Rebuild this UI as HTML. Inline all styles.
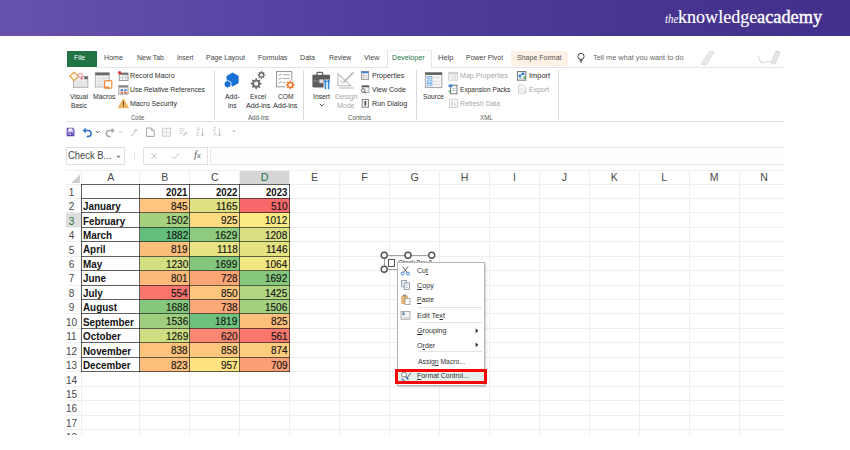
<!DOCTYPE html>
<html><head><meta charset="utf-8"><title>Format Control</title>
<style>
html,body{margin:0;padding:0;background:#fff;}
body{width:850px;height:450px;position:relative;overflow:hidden;font-family:"Liberation Sans",sans-serif;}
.t{position:absolute;white-space:nowrap;display:block;}
.r{position:absolute;display:block;}
u{text-decoration-thickness:0.6px;text-underline-offset:0.8px;}
</style></head><body>
<div class="r" style="left:0.00px;top:0.00px;width:850.00px;height:36.00px;background:linear-gradient(90deg,#6753ad 0%,#5a46a4 25%,#4f3c9a 50%,#473590 75%,#43308c 100%);"></div>
<span class="t" style="left:664.70px;top:11.80px;font-size:12px;line-height:15.6px;color:#fff;font-family:'Liberation Serif',serif;font-style:italic;transform:scaleX(0.9072);transform-origin:0 50%;">the</span>
<span class="t" style="left:678.00px;top:6.00px;font-size:18px;line-height:23.4px;color:#fff;font-family:'Liberation Serif',serif;transform:scaleX(1.0041);transform-origin:0 50%;-webkit-text-stroke:0.15px #fff;">knowledge</span>
<span class="t" style="left:757.30px;top:6.00px;font-size:18px;line-height:23.4px;color:#fff;font-family:'Liberation Serif',serif;transform:scaleX(1.0179);transform-origin:0 50%;-webkit-text-stroke:0.4px #fff;">academy</span>
<div class="r" style="left:67.00px;top:51.00px;width:30.00px;height:16.00px;background:#217346;"></div>
<span class="t" style="left:73.70px;top:53.20px;font-size:8.0px;line-height:10.4px;color:#fff;font-family:'Liberation Sans',sans-serif;transform:scaleX(0.8456);transform-origin:0 50%;">File</span>
<span class="t" style="left:104.00px;top:53.20px;font-size:8.0px;line-height:10.4px;color:#444;font-family:'Liberation Sans',sans-serif;transform:scaleX(0.8903);transform-origin:0 50%;">Home</span>
<span class="t" style="left:136.50px;top:53.20px;font-size:8.0px;line-height:10.4px;color:#444;font-family:'Liberation Sans',sans-serif;transform:scaleX(0.8715);transform-origin:0 50%;">New Tab</span>
<span class="t" style="left:177.00px;top:53.20px;font-size:8.0px;line-height:10.4px;color:#444;font-family:'Liberation Sans',sans-serif;transform:scaleX(0.8197);transform-origin:0 50%;">Insert</span>
<span class="t" style="left:206.00px;top:53.20px;font-size:8.0px;line-height:10.4px;color:#444;font-family:'Liberation Sans',sans-serif;transform:scaleX(0.8681);transform-origin:0 50%;">Page Layout</span>
<span class="t" style="left:257.60px;top:53.20px;font-size:8.0px;line-height:10.4px;color:#444;font-family:'Liberation Sans',sans-serif;transform:scaleX(0.8818);transform-origin:0 50%;">Formulas</span>
<span class="t" style="left:300.00px;top:53.20px;font-size:8.0px;line-height:10.4px;color:#444;font-family:'Liberation Sans',sans-serif;transform:scaleX(0.8877);transform-origin:0 50%;">Data</span>
<span class="t" style="left:328.50px;top:53.20px;font-size:8.0px;line-height:10.4px;color:#444;font-family:'Liberation Sans',sans-serif;transform:scaleX(0.8463);transform-origin:0 50%;">Review</span>
<span class="t" style="left:363.70px;top:53.20px;font-size:8.0px;line-height:10.4px;color:#444;font-family:'Liberation Sans',sans-serif;transform:scaleX(0.8898);transform-origin:0 50%;">View</span>
<div class="r" style="left:97.00px;top:66.60px;width:686.50px;height:1.00px;background:#e4e4e4;"></div>
<div class="r" style="left:386.50px;top:50.00px;width:45.00px;height:18.00px;background:#fff;border:1px solid #e2e2e2;box-sizing:border-box;border-bottom:none;border-top-color:#f0f0f0;"></div>
<span class="t" style="left:392.00px;top:53.20px;font-size:8.0px;line-height:10.4px;color:#217346;font-family:'Liberation Sans',sans-serif;transform:scaleX(0.8940);transform-origin:0 50%;">Developer</span>
<span class="t" style="left:437.90px;top:53.20px;font-size:8.0px;line-height:10.4px;color:#444;font-family:'Liberation Sans',sans-serif;transform:scaleX(0.9360);transform-origin:0 50%;">Help</span>
<span class="t" style="left:466.30px;top:53.20px;font-size:8.0px;line-height:10.4px;color:#444;font-family:'Liberation Sans',sans-serif;transform:scaleX(0.8692);transform-origin:0 50%;">Power Pivot</span>
<div class="r" style="left:511.00px;top:51.40px;width:56.70px;height:14.40px;background:#fdf1e5;"></div>
<span class="t" style="left:517.00px;top:53.20px;font-size:8.0px;line-height:10.4px;color:#555;font-family:'Liberation Sans',sans-serif;transform:scaleX(0.8779);transform-origin:0 50%;">Shape Format</span>
<span class="t" style="left:592.50px;top:53.20px;font-size:8.0px;line-height:10.4px;color:#6a6a6a;font-family:'Liberation Sans',sans-serif;transform:scaleX(0.9167);transform-origin:0 50%;">Tell me what you want to do</span>
<svg class="r" style="left:576.00px;top:52.00px" width="10" height="12" viewBox="0 0 10 12"><circle cx="5" cy="4.4" r="3.1" fill="none" stroke="#444" stroke-width="1"/><path d="M3.6 8.4h2.8M3.9 10h2.2" stroke="#444" stroke-width="1" fill="none"/></svg>
<svg class="r" style="left:698.00px;top:50.00px" width="18" height="16" viewBox="0 0 18 16"><path d="M12 1 L16 2 L8 15 L3 14 Z" fill="#e9e9e9" stroke="#d5d5d5" stroke-width="0.8"/></svg>
<svg class="r" style="left:756.00px;top:50.00px" width="26" height="16" viewBox="0 0 26 16"><path d="M20 1 L24 2 L19 14 L15 13 Z" fill="#e6e6e6" stroke="#d0d0d0" stroke-width="0.8"/><path d="M2 6 L5 13 L15 11" fill="none" stroke="#d8d8d8" stroke-width="1"/></svg>
<div class="r" style="left:66.00px;top:121.00px;width:717.50px;height:1.00px;background:#dedede;"></div>
<div class="r" style="left:214.00px;top:69.50px;width:1.00px;height:50.00px;background:#d9d9d9;"></div>
<div class="r" style="left:302.90px;top:69.50px;width:1.00px;height:50.00px;background:#d9d9d9;"></div>
<div class="r" style="left:415.90px;top:69.50px;width:1.00px;height:50.00px;background:#d9d9d9;"></div>
<div class="r" style="left:557.50px;top:69.50px;width:1.00px;height:50.00px;background:#d9d9d9;"></div>
<span class="t" style="left:69.50px;top:91.50px;font-size:8.0px;line-height:10.4px;color:#2e2e2e;font-family:'Liberation Sans',sans-serif;transform:scaleX(0.8316);transform-origin:0 50%;">Visual</span>
<span class="t" style="left:70.50px;top:100.90px;font-size:8.0px;line-height:10.4px;color:#2e2e2e;font-family:'Liberation Sans',sans-serif;transform:scaleX(0.8179);transform-origin:0 50%;">Basic</span>
<span class="t" style="left:92.50px;top:91.50px;font-size:8.0px;line-height:10.4px;color:#2e2e2e;font-family:'Liberation Sans',sans-serif;transform:scaleX(0.8579);transform-origin:0 50%;">Macros</span>
<span class="t" style="left:130.00px;top:70.60px;font-size:8.0px;line-height:10.4px;color:#2e2e2e;font-family:'Liberation Sans',sans-serif;transform:scaleX(0.8878);transform-origin:0 50%;">Record Macro</span>
<span class="t" style="left:130.00px;top:84.60px;font-size:8.0px;line-height:10.4px;color:#2e2e2e;font-family:'Liberation Sans',sans-serif;transform:scaleX(0.8476);transform-origin:0 50%;">Use Relative References</span>
<span class="t" style="left:130.00px;top:98.60px;font-size:8.0px;line-height:10.4px;color:#2e2e2e;font-family:'Liberation Sans',sans-serif;transform:scaleX(0.8810);transform-origin:0 50%;">Macro Security</span>
<span class="t" style="left:130.60px;top:112.82px;font-size:7.2px;line-height:9.36px;color:#555;font-family:'Liberation Sans',sans-serif;transform:scaleX(0.7785);transform-origin:0 50%;">Code</span>
<span class="t" style="left:224.50px;top:91.50px;font-size:8.0px;line-height:10.4px;color:#2e2e2e;font-family:'Liberation Sans',sans-serif;transform:scaleX(0.8581);transform-origin:0 50%;">Add-</span>
<span class="t" style="left:227.50px;top:100.90px;font-size:8.0px;line-height:10.4px;color:#2e2e2e;font-family:'Liberation Sans',sans-serif;transform:scaleX(0.8312);transform-origin:0 50%;">ins</span>
<span class="t" style="left:249.50px;top:91.50px;font-size:8.0px;line-height:10.4px;color:#2e2e2e;font-family:'Liberation Sans',sans-serif;transform:scaleX(0.8179);transform-origin:0 50%;">Excel</span>
<span class="t" style="left:245.50px;top:100.90px;font-size:8.0px;line-height:10.4px;color:#2e2e2e;font-family:'Liberation Sans',sans-serif;transform:scaleX(0.8958);transform-origin:0 50%;">Add-ins</span>
<span class="t" style="left:277.50px;top:91.50px;font-size:8.0px;line-height:10.4px;color:#2e2e2e;font-family:'Liberation Sans',sans-serif;transform:scaleX(0.8305);transform-origin:0 50%;">COM</span>
<span class="t" style="left:273.00px;top:100.90px;font-size:8.0px;line-height:10.4px;color:#2e2e2e;font-family:'Liberation Sans',sans-serif;transform:scaleX(0.8995);transform-origin:0 50%;">Add-ins</span>
<span class="t" style="left:248.00px;top:112.82px;font-size:7.2px;line-height:9.36px;color:#555;font-family:'Liberation Sans',sans-serif;transform:scaleX(0.8602);transform-origin:0 50%;">Add-ins</span>
<span class="t" style="left:312.50px;top:91.50px;font-size:8.0px;line-height:10.4px;color:#2e2e2e;font-family:'Liberation Sans',sans-serif;transform:scaleX(0.8497);transform-origin:0 50%;">Insert</span>
<svg class="r" style="left:318.50px;top:103.30px" width="6" height="4" viewBox="0 0 6 4"><path d="M0.8 0.8 L3 3 L5.2 0.8" fill="none" stroke="#555" stroke-width="0.9"/></svg>
<span class="t" style="left:334.50px;top:91.50px;font-size:8.0px;line-height:10.4px;color:#a6a6a6;font-family:'Liberation Sans',sans-serif;transform:scaleX(0.9035);transform-origin:0 50%;">Design</span>
<span class="t" style="left:337.00px;top:100.90px;font-size:8.0px;line-height:10.4px;color:#a6a6a6;font-family:'Liberation Sans',sans-serif;transform:scaleX(0.8745);transform-origin:0 50%;">Mode</span>
<span class="t" style="left:371.80px;top:70.60px;font-size:8.0px;line-height:10.4px;color:#2e2e2e;font-family:'Liberation Sans',sans-serif;transform:scaleX(0.8831);transform-origin:0 50%;">Properties</span>
<span class="t" style="left:371.80px;top:84.60px;font-size:8.0px;line-height:10.4px;color:#2e2e2e;font-family:'Liberation Sans',sans-serif;transform:scaleX(0.8769);transform-origin:0 50%;">View Code</span>
<span class="t" style="left:371.80px;top:98.60px;font-size:8.0px;line-height:10.4px;color:#2e2e2e;font-family:'Liberation Sans',sans-serif;transform:scaleX(0.8894);transform-origin:0 50%;">Run Dialog</span>
<span class="t" style="left:348.00px;top:112.82px;font-size:7.2px;line-height:9.36px;color:#555;font-family:'Liberation Sans',sans-serif;transform:scaleX(0.8579);transform-origin:0 50%;">Controls</span>
<span class="t" style="left:423.00px;top:91.50px;font-size:8.0px;line-height:10.4px;color:#2e2e2e;font-family:'Liberation Sans',sans-serif;transform:scaleX(0.8285);transform-origin:0 50%;">Source</span>
<span class="t" style="left:460.00px;top:70.60px;font-size:8.0px;line-height:10.4px;color:#a6a6a6;font-family:'Liberation Sans',sans-serif;transform:scaleX(0.8848);transform-origin:0 50%;">Map Properties</span>
<span class="t" style="left:460.00px;top:84.60px;font-size:8.0px;line-height:10.4px;color:#2e2e2e;font-family:'Liberation Sans',sans-serif;transform:scaleX(0.8213);transform-origin:0 50%;">Expansion Packs</span>
<span class="t" style="left:460.00px;top:98.60px;font-size:8.0px;line-height:10.4px;color:#a6a6a6;font-family:'Liberation Sans',sans-serif;transform:scaleX(0.8487);transform-origin:0 50%;">Refresh Data</span>
<span class="t" style="left:528.50px;top:70.60px;font-size:8.0px;line-height:10.4px;color:#2e2e2e;font-family:'Liberation Sans',sans-serif;transform:scaleX(0.9307);transform-origin:0 50%;">Import</span>
<span class="t" style="left:528.50px;top:84.60px;font-size:8.0px;line-height:10.4px;color:#a6a6a6;font-family:'Liberation Sans',sans-serif;transform:scaleX(0.8780);transform-origin:0 50%;">Export</span>
<span class="t" style="left:480.00px;top:112.82px;font-size:7.2px;line-height:9.36px;color:#555;font-family:'Liberation Sans',sans-serif;transform:scaleX(0.8646);transform-origin:0 50%;">XML</span>
<svg class="r" style="left:66.00px;top:68.00px" width="496" height="46" viewBox="0 0 496 46"><rect x="7.50" y="8.50" width="14.30" height="10.80" fill="#ededed" stroke="#a8a8a8" stroke-width="0.9" rx="0"/><rect x="18.30" y="8.50" width="3.50" height="2.70" fill="#666" rx="0"/><rect x="10.00" y="13.00" width="10.00" height="0.60" fill="#d4d4d4" rx="0"/><rect x="10.00" y="15.50" width="10.00" height="0.60" fill="#d4d4d4" rx="0"/><rect x="10.00" y="17.50" width="10.00" height="0.60" fill="#d4d4d4" rx="0"/><path d="M8.20 4.20 L12.60 8.20 L8.20 12.60 L3.80 8.20 Z" fill="#fdf6ea" stroke="#e5a54e" stroke-width="1.3"/><circle cx="14.30" cy="7.30" r="2.1" fill="#fff" stroke="#e79a9a" stroke-width="1.1"/><circle cx="15.80" cy="10.40" r="1.0" fill="#e0504a"/><rect x="29.30" y="4.70" width="14.00" height="14.30" fill="#efefef" stroke="#b0b0b0" stroke-width="0.9" rx="0"/><rect x="29.30" y="4.70" width="14.00" height="2.60" fill="#6a6a6a" rx="0"/><rect x="31.00" y="10.00" width="10.50" height="0.70" fill="#d9d9d9" rx="0"/><rect x="31.00" y="13.00" width="10.50" height="0.70" fill="#d9d9d9" rx="0"/><rect x="31.00" y="16.00" width="10.50" height="0.70" fill="#d9d9d9" rx="0"/><rect x="33.50" y="8.50" width="0.60" height="9.50" fill="#dcdcdc" rx="0"/><rect x="37.00" y="8.50" width="0.60" height="9.50" fill="#dcdcdc" rx="0"/><rect x="40.50" y="8.50" width="0.60" height="9.50" fill="#dcdcdc" rx="0"/><rect x="38.60" y="12.60" width="7.20" height="7.60" fill="#fff" stroke="#ec8a3a" stroke-width="1.2" rx="1"/><rect x="38.60" y="18.40" width="4.90" height="2.20" fill="#ec8a3a" rx="0.8"/><rect x="53.30" y="5.00" width="8.70" height="7.60" fill="#f6f6f6" stroke="#8c8c8c" stroke-width="0.9" rx="0"/><rect x="53.30" y="5.00" width="8.70" height="1.80" fill="#6e6e6e" rx="0"/><rect x="56.20" y="6.80" width="0.50" height="5.80" fill="#bdbdbd" rx="0"/><rect x="59.10" y="6.80" width="0.50" height="5.80" fill="#bdbdbd" rx="0"/><rect x="53.30" y="9.50" width="8.70" height="0.50" fill="#bdbdbd" rx="0"/><circle cx="53.60" cy="4.60" r="1.7" fill="#e03a3a"/><rect x="52.80" y="17.60" width="9.20" height="8.60" fill="#f4f4f4" stroke="#9a9a9a" stroke-width="0.9" rx="0"/><rect x="52.80" y="17.60" width="9.20" height="2.00" fill="#8a8a8a" rx="0"/><rect x="54.60" y="21.30" width="2.40" height="1.70" fill="#3b7bd0" rx="0"/><rect x="58.20" y="21.30" width="2.40" height="1.70" fill="#3b7bd0" rx="0"/><rect x="54.60" y="23.80" width="2.40" height="1.70" fill="#d4552e" rx="0"/><rect x="58.20" y="23.80" width="2.40" height="1.70" fill="#d4552e" rx="0"/><path d="M57.40 30.60 L62.60 39.80 L52.20 39.80 Z" fill="#f1b65a" stroke="#e3a64a" stroke-width="0.6"/><rect x="56.90" y="33.20" width="1.00" height="3.80" fill="#444" rx="0"/><rect x="56.90" y="37.80" width="1.00" height="1.10" fill="#444" rx="0"/><polygon points="166.60,4.40 172.66,7.90 172.66,14.90 166.60,18.40 160.54,14.90 160.54,7.90" fill="#1a6fd6"/><polygon points="161.60,12.30 164.98,14.25 164.98,18.15 161.60,20.10 158.22,18.15 158.22,14.25" fill="#1a6fd6" stroke="#fff" stroke-width="0.9"/><path d="M195.68 15.21 L195.67 16.29 L193.92 16.87 L193.62 17.57 L194.42 19.23 L193.65 19.99 L192.00 19.16 L191.30 19.44 L190.69 21.18 L189.61 21.17 L189.03 19.42 L188.33 19.12 L186.67 19.92 L185.91 19.15 L186.74 17.50 L186.46 16.80 L184.72 16.19 L184.73 15.11 L186.48 14.53 L186.78 13.83 L185.98 12.17 L186.75 11.41 L188.40 12.24 L189.10 11.96 L189.71 10.22 L190.79 10.23 L191.37 11.98 L192.07 12.28 L193.73 11.48 L194.49 12.25 L193.66 13.90 L193.94 14.60 Z M192.30 15.70 A2.1 2.1 0 1 0 188.10 15.70 A2.1 2.1 0 1 0 192.30 15.70 Z" fill="#6b6b6b" fill-rule="evenodd"/><path d="M199.38 6.65 L199.38 7.43 L198.07 7.84 L197.86 8.34 L198.47 9.57 L197.91 10.12 L196.70 9.48 L196.19 9.69 L195.75 10.98 L194.97 10.98 L194.56 9.67 L194.06 9.46 L192.83 10.07 L192.28 9.51 L192.92 8.30 L192.71 7.79 L191.42 7.35 L191.42 6.57 L192.73 6.16 L192.94 5.66 L192.33 4.43 L192.89 3.88 L194.10 4.52 L194.61 4.31 L195.05 3.02 L195.83 3.02 L196.24 4.33 L196.74 4.54 L197.97 3.93 L198.52 4.49 L197.88 5.70 L198.09 6.21 Z M196.90 7.00 A1.5 1.5 0 1 0 193.90 7.00 A1.5 1.5 0 1 0 196.90 7.00 Z" fill="#6b6b6b" fill-rule="evenodd"/><rect x="210.60" y="3.60" width="15.20" height="15.20" fill="#fff" stroke="#8a8a8a" stroke-width="0.9" rx="0"/><path d="M212.60 6.60 L213.60 7.60 L215.20 5.70" fill="none" stroke="#666" stroke-width="0.7"/><rect x="216.60" y="6.40" width="7.20" height="0.80" fill="#9a9a9a" rx="0"/><path d="M212.60 10.40 L213.60 11.40 L215.20 9.50" fill="none" stroke="#666" stroke-width="0.7"/><rect x="216.60" y="10.20" width="7.20" height="0.80" fill="#9a9a9a" rx="0"/><path d="M212.60 14.20 L213.60 15.20 L215.20 13.30" fill="none" stroke="#666" stroke-width="0.7"/><rect x="216.60" y="14.00" width="7.20" height="0.80" fill="#9a9a9a" rx="0"/><circle cx="224.20" cy="16.90" r="5.3" fill="#fff"/><path d="M228.68 16.50 L228.67 17.39 L227.16 17.83 L226.92 18.39 L227.65 19.79 L227.02 20.41 L225.63 19.65 L225.07 19.88 L224.60 21.38 L223.71 21.37 L223.27 19.86 L222.71 19.62 L221.31 20.35 L220.69 19.72 L221.45 18.33 L221.22 17.77 L219.72 17.30 L219.73 16.41 L221.24 15.97 L221.48 15.41 L220.75 14.01 L221.38 13.39 L222.77 14.15 L223.33 13.92 L223.80 12.42 L224.69 12.43 L225.13 13.94 L225.69 14.18 L227.09 13.45 L227.71 14.08 L226.95 15.47 L227.18 16.03 Z M225.80 16.90 A1.6 1.6 0 1 0 222.60 16.90 A1.6 1.6 0 1 0 225.80 16.90 Z" fill="#e8762c" fill-rule="evenodd"/><rect x="250.90" y="4.30" width="5.80" height="3.70" fill="none" stroke="#5c5c5c" stroke-width="1.2" rx="1"/><rect x="246.40" y="6.80" width="17.60" height="12.60" fill="#5c5c5c" rx="0.8"/><rect x="246.40" y="12.60" width="17.60" height="1.00" fill="#8e8e8e" rx="0"/><rect x="253.40" y="11.40" width="3.60" height="3.80" fill="#dcdcdc" rx="0"/><rect x="257.60" y="11.60" width="7.00" height="10.00" fill="#fff" rx="0"/><rect x="258.60" y="12.40" width="1.60" height="8.80" fill="#2e8ad8" rx="0"/><rect x="261.80" y="12.40" width="1.60" height="8.80" fill="#2e8ad8" rx="0"/><circle cx="259.40" cy="13.20" r="1.3" fill="#2e8ad8"/><circle cx="262.60" cy="13.20" r="1.3" fill="#2e8ad8"/><path d="M272.00 5.80 L272.00 17.60 L284.60 17.60 Z" fill="none" stroke="#c4c4c4" stroke-width="1.3"/><path d="M274.80 12.00 L274.80 15.00 L278.00 15.00 Z" fill="none" stroke="#d2d2d2" stroke-width="0.8"/><path d="M287.40 4.40 L277.60 14.40" fill="none" stroke="#b9b9b9" stroke-width="1.6"/><rect x="273.00" y="18.80" width="14.60" height="2.20" fill="#dcdcdc" rx="0"/><rect x="295.40" y="3.40" width="7.20" height="8.00" fill="#f3f3f3" stroke="#8e8e8e" stroke-width="0.8" rx="0"/><rect x="295.40" y="3.40" width="7.20" height="1.80" fill="#3f7fcf" rx="0"/><rect x="297.60" y="5.20" width="0.50" height="6.20" fill="#9f9f9f" rx="0"/><rect x="295.40" y="7.20" width="7.20" height="0.50" fill="#b5b5b5" rx="0"/><rect x="295.40" y="9.20" width="7.20" height="0.50" fill="#b5b5b5" rx="0"/><rect x="296.60" y="17.80" width="6.40" height="6.80" fill="#f3f3f3" stroke="#9a9a9a" stroke-width="0.8" rx="0"/><rect x="295.60" y="17.60" width="7.40" height="1.60" fill="#555" rx="0"/><circle cx="297.20" cy="22.40" r="1.8" fill="#fff" stroke="#555" stroke-width="0.9"/><path d="M298.50 23.80 L300.00 25.40" fill="none" stroke="#555" stroke-width="1.0"/><rect x="296.20" y="31.40" width="6.20" height="7.80" fill="#f6f6f6" stroke="#777" stroke-width="0.9" rx="0"/><rect x="298.40" y="33.00" width="1.80" height="4.60" fill="#555" rx="0"/><rect x="359.30" y="4.60" width="16.60" height="15.00" fill="#f5f5f5" stroke="#9a9a9a" stroke-width="0.9" rx="0"/><rect x="359.30" y="4.60" width="16.60" height="2.30" fill="#5e5e5e" rx="0"/><rect x="361.20" y="8.60" width="4.80" height="2.20" fill="#d4e6f9" stroke="#6aa6e4" stroke-width="0.7" rx="0"/><rect x="367.40" y="9.40" width="6.40" height="0.60" fill="#c8c8c8" rx="0"/><rect x="361.20" y="12.10" width="4.80" height="2.20" fill="#d4e6f9" stroke="#6aa6e4" stroke-width="0.7" rx="0"/><rect x="367.40" y="12.90" width="6.40" height="0.60" fill="#c8c8c8" rx="0"/><rect x="361.20" y="15.60" width="4.80" height="2.20" fill="#d4e6f9" stroke="#6aa6e4" stroke-width="0.7" rx="0"/><rect x="367.40" y="16.40" width="6.40" height="0.60" fill="#c8c8c8" rx="0"/><rect x="382.80" y="4.40" width="8.80" height="7.80" fill="#f7f7f7" stroke="#c9c9c9" stroke-width="0.9" rx="0"/><rect x="382.80" y="4.40" width="8.80" height="2.00" fill="#cfcfcf" rx="0"/><rect x="386.00" y="8.00" width="3.50" height="3.00" fill="none" stroke="#cfcfcf" stroke-width="0.7" rx="0"/><rect x="384.60" y="17.20" width="6.40" height="8.60" fill="#fafafa" stroke="#6a6a6a" stroke-width="0.9" rx="0"/><rect x="382.60" y="16.60" width="4.00" height="2.20" fill="#2f7ed6" rx="0"/><path d="M382.20 23.20 L385.00 21.40 L385.00 25.00 Z" fill="#4aa564"/><rect x="386.60" y="20.20" width="2.80" height="0.60" fill="#888" rx="0"/><rect x="386.60" y="22.40" width="2.80" height="0.60" fill="#888" rx="0"/><rect x="383.40" y="31.20" width="8.20" height="8.20" fill="#f7f7f7" stroke="#cdcdcd" stroke-width="0.9" rx="0"/><rect x="385.20" y="33.60" width="1.80" height="3.80" fill="#d6d6d6" rx="0"/><rect x="388.20" y="35.00" width="1.60" height="2.40" fill="#d6d6d6" rx="0"/><rect x="451.40" y="3.60" width="8.40" height="8.60" fill="#f7f7f7" stroke="#6a6a6a" stroke-width="0.9" rx="0"/><rect x="455.40" y="4.60" width="3.00" height="2.40" fill="#2f7ed6" rx="0"/><rect x="452.60" y="6.60" width="2.60" height="2.60" fill="#2f7ed6" rx="0"/><path d="M460.60 9.60 L457.60 7.80 L457.60 11.40 Z" fill="#4aa564"/><rect x="453.00" y="10.40" width="3.00" height="0.60" fill="#777" rx="0"/><path d="M452.60 17.00 L457.40 17.00 L459.80 19.40 L459.80 25.20 L452.60 25.20 Z" fill="#f8f8f8" stroke="#cdcdcd" stroke-width="0.9"/><rect x="454.20" y="20.60" width="3.80" height="0.60" fill="#d6d6d6" rx="0"/><rect x="454.20" y="22.60" width="3.80" height="0.60" fill="#d6d6d6" rx="0"/><path d="M460.80 24.00 L458.20 22.40 L458.20 25.60 Z" fill="#d0d0d0"/></svg>
<svg class="r" style="left:64.00px;top:124.00px" width="180" height="16" viewBox="0 0 180 16"><path d="M3.20 4.40 L8.60 4.40 L9.90 5.70 L9.90 11.60 L3.20 11.60 Z" fill="#cfc6ee" stroke="#5a3fb5" stroke-width="1.1"/><rect x="4.80" y="4.40" width="3.40" height="2.20" fill="#f4f1fb" rx="0"/><rect x="4.40" y="8.40" width="4.40" height="3.20" fill="#5a3fb5" rx="0"/><rect x="5.60" y="9.40" width="1.40" height="1.60" fill="#efeafb" rx="0"/><path d="M20.200000000000003 6.599999999999994 H24.200000000000003 A2.9 2.9 0 0 1 24.200000000000003 12.400000000000006 H22.599999999999994" fill="none" stroke="#2b72c2" stroke-width="1.5"/><path d="M18.60 6.60 L21.80 3.80 L21.80 9.40 Z" fill="#2b72c2"/><path d="M31.80 7.00 L33.60 8.80 L35.40 7.00" fill="none" stroke="#444" stroke-width="0.9"/><path d="M49.2 6.599999999999994 H45.2 A2.9 2.9 0 0 0 45.2 12.400000000000006 H46.8" fill="none" stroke="#a9a9a9" stroke-width="1.5"/><path d="M50.80 6.60 L47.60 3.80 L47.60 9.40 Z" fill="#a9a9a9"/><path d="M55.00 7.00 L56.80 8.80 L58.60 7.00" fill="none" stroke="#c4c4c4" stroke-width="0.9"/><path d="M67.00 12.40 L70.20 9.20" fill="none" stroke="#c2c2c2" stroke-width="1.1"/><path d="M69.40 7.20 L72.00 4.60 L73.60 6.20 L71.00 8.80 Z" fill="#cfcfcf"/><path d="M82.60 4.00 L87.60 4.00 L90.20 6.60 L90.20 12.40 L82.60 12.40 Z" fill="#fff" stroke="#9a9a9a" stroke-width="0.9"/><path d="M87.60 4.00 L87.60 6.60 L90.20 6.60" fill="none" stroke="#9a9a9a" stroke-width="0.8"/><rect x="98.40" y="4.20" width="8.00" height="8.00" fill="#fafafa" stroke="#c6c6c6" stroke-width="0.9" rx="0"/><rect x="102.10" y="4.20" width="0.60" height="8.00" fill="#cdcdcd" rx="0"/><rect x="98.40" y="7.90" width="8.00" height="0.60" fill="#cdcdcd" rx="0"/><rect x="115.20" y="4.40" width="5.40" height="0.80" fill="#c6c6c6" rx="0"/><rect x="115.20" y="6.60" width="5.40" height="0.80" fill="#c6c6c6" rx="0"/><rect x="115.20" y="8.80" width="3.80" height="0.80" fill="#c6c6c6" rx="0"/><path d="M119.40 11.60 L123.20 8.00" fill="none" stroke="#bdbdbd" stroke-width="1.2"/><rect x="138.00" y="4.20" width="0.80" height="7.80" fill="#c0c0c0" rx="0"/><path d="M136.60 10.20 L138.40 12.40 L140.20 10.20 Z" fill="#c0c0c0"/><rect x="155.20" y="4.20" width="0.80" height="7.80" fill="#c0c0c0" rx="0"/><path d="M153.80 10.20 L155.60 12.40 L157.40 10.20 Z" fill="#c0c0c0"/><path d="M168.40 6.40 L169.80 8.00 L171.20 6.40 Z" fill="#9a9a9a"/></svg>
<span class="t" style="left:196.40px;top:127.08px;font-size:4.8px;line-height:6.24px;color:#bdbdbd;font-family:'Liberation Sans',sans-serif;">A</span>
<span class="t" style="left:196.40px;top:131.68px;font-size:4.8px;line-height:6.24px;color:#bdbdbd;font-family:'Liberation Sans',sans-serif;transform:scaleX(1.0232);transform-origin:0 50%;">Z</span>
<span class="t" style="left:213.40px;top:127.08px;font-size:4.8px;line-height:6.24px;color:#bdbdbd;font-family:'Liberation Sans',sans-serif;transform:scaleX(1.0232);transform-origin:0 50%;">Z</span>
<span class="t" style="left:213.40px;top:131.68px;font-size:4.8px;line-height:6.24px;color:#bdbdbd;font-family:'Liberation Sans',sans-serif;">A</span>
<div class="r" style="left:66.00px;top:147.30px;width:58.80px;height:17.30px;background:#fff;border:1px solid #e1e1e1;box-sizing:border-box;"></div>
<span class="t" style="left:67.60px;top:149.40px;font-size:10px;line-height:13.0px;color:#444;font-family:'Liberation Sans',sans-serif;transform:scaleX(0.9409);transform-origin:0 50%;">Check B...</span>
<svg class="r" style="left:116.30px;top:154.50px" width="5" height="4" viewBox="0 0 5 4"><path d="M0.3 0.8 L2.5 3 L4.7 0.8 Z" fill="#777"/></svg>
<div class="r" style="left:133.50px;top:153.20px;width:1.00px;height:1.00px;background:#bdbdbd;"></div>
<div class="r" style="left:133.50px;top:155.50px;width:1.00px;height:1.00px;background:#bdbdbd;"></div>
<div class="r" style="left:133.50px;top:157.80px;width:1.00px;height:1.00px;background:#bdbdbd;"></div>
<div class="r" style="left:142.80px;top:147.30px;width:65.60px;height:17.30px;background:#fff;border:1px solid #e1e1e1;box-sizing:border-box;"></div>
<svg class="r" style="left:150.00px;top:152.30px" width="8" height="8" viewBox="0 0 8 8"><path d="M1.2 1.2 L6.8 6.8 M6.8 1.2 L1.2 6.8" stroke="#c4c4c4" stroke-width="1" fill="none"/></svg>
<svg class="r" style="left:171.00px;top:152.30px" width="9" height="8" viewBox="0 0 9 8"><path d="M1 4.3 L3.4 6.8 L8 1.4" stroke="#c4c4c4" stroke-width="1" fill="none"/></svg>
<span class="t" style="left:193.80px;top:149.42px;font-size:9.5px;line-height:12.35px;color:#555;font-family:'Liberation Serif',serif;font-style:italic;transform:scaleX(1.0609);transform-origin:0 50%;">f</span>
<span class="t" style="left:196.60px;top:152.32px;font-size:7.2px;line-height:9.36px;color:#555;font-family:'Liberation Serif',serif;font-style:italic;transform:scaleX(1.1891);transform-origin:0 50%;">x</span>
<div class="r" style="left:210.20px;top:147.30px;width:573.30px;height:17.30px;background:#fdfdfd;border:1px solid #e6e6e6;box-sizing:border-box;border-right:none;"></div>
<div class="r" style="left:66.00px;top:183.50px;width:717.50px;height:1.00px;background:#eeeeee;"></div>
<div class="r" style="left:66.00px;top:197.94px;width:717.50px;height:1.00px;background:#eeeeee;"></div>
<div class="r" style="left:66.00px;top:212.38px;width:717.50px;height:1.00px;background:#eeeeee;"></div>
<div class="r" style="left:66.00px;top:226.82px;width:717.50px;height:1.00px;background:#eeeeee;"></div>
<div class="r" style="left:66.00px;top:241.26px;width:717.50px;height:1.00px;background:#eeeeee;"></div>
<div class="r" style="left:66.00px;top:255.70px;width:717.50px;height:1.00px;background:#eeeeee;"></div>
<div class="r" style="left:66.00px;top:270.14px;width:717.50px;height:1.00px;background:#eeeeee;"></div>
<div class="r" style="left:66.00px;top:284.58px;width:717.50px;height:1.00px;background:#eeeeee;"></div>
<div class="r" style="left:66.00px;top:299.02px;width:717.50px;height:1.00px;background:#eeeeee;"></div>
<div class="r" style="left:66.00px;top:313.46px;width:717.50px;height:1.00px;background:#eeeeee;"></div>
<div class="r" style="left:66.00px;top:327.90px;width:717.50px;height:1.00px;background:#eeeeee;"></div>
<div class="r" style="left:66.00px;top:342.34px;width:717.50px;height:1.00px;background:#eeeeee;"></div>
<div class="r" style="left:66.00px;top:356.78px;width:717.50px;height:1.00px;background:#eeeeee;"></div>
<div class="r" style="left:66.00px;top:371.22px;width:717.50px;height:1.00px;background:#eeeeee;"></div>
<div class="r" style="left:66.00px;top:385.66px;width:717.50px;height:1.00px;background:#eeeeee;"></div>
<div class="r" style="left:66.00px;top:400.10px;width:717.50px;height:1.00px;background:#eeeeee;"></div>
<div class="r" style="left:66.00px;top:414.54px;width:717.50px;height:1.00px;background:#eeeeee;"></div>
<div class="r" style="left:66.00px;top:428.98px;width:717.50px;height:1.00px;background:#eeeeee;"></div>
<div class="r" style="left:66.00px;top:169.50px;width:717.50px;height:1.00px;background:#efefef;"></div>
<div class="r" style="left:81.10px;top:170.00px;width:1.00px;height:265.00px;background:#eeeeee;"></div>
<div class="r" style="left:139.30px;top:170.00px;width:1.00px;height:265.00px;background:#eeeeee;"></div>
<div class="r" style="left:189.25px;top:170.00px;width:1.00px;height:265.00px;background:#eeeeee;"></div>
<div class="r" style="left:239.20px;top:170.00px;width:1.00px;height:265.00px;background:#eeeeee;"></div>
<div class="r" style="left:289.15px;top:170.00px;width:1.00px;height:265.00px;background:#eeeeee;"></div>
<div class="r" style="left:339.10px;top:170.00px;width:1.00px;height:265.00px;background:#eeeeee;"></div>
<div class="r" style="left:389.05px;top:170.00px;width:1.00px;height:265.00px;background:#eeeeee;"></div>
<div class="r" style="left:439.00px;top:170.00px;width:1.00px;height:265.00px;background:#eeeeee;"></div>
<div class="r" style="left:488.95px;top:170.00px;width:1.00px;height:265.00px;background:#eeeeee;"></div>
<div class="r" style="left:538.90px;top:170.00px;width:1.00px;height:265.00px;background:#eeeeee;"></div>
<div class="r" style="left:588.85px;top:170.00px;width:1.00px;height:265.00px;background:#eeeeee;"></div>
<div class="r" style="left:638.80px;top:170.00px;width:1.00px;height:265.00px;background:#eeeeee;"></div>
<div class="r" style="left:688.75px;top:170.00px;width:1.00px;height:265.00px;background:#eeeeee;"></div>
<div class="r" style="left:738.70px;top:170.00px;width:1.00px;height:265.00px;background:#eeeeee;"></div>
<div class="r" style="left:240.20px;top:170.50px;width:48.95px;height:13.00px;background:#d6d6d6;"></div>
<div class="r" style="left:66.00px;top:213.38px;width:15.10px;height:13.44px;background:#dedede;"></div>
<svg class="r" style="left:70.00px;top:173.50px" width="11" height="10" viewBox="0 0 11 10"><path d="M10 0.5 L10 9 L1 9 Z" fill="#d0d0d0"/></svg>
<span class="t" style="left:107.16px;top:170.71px;font-size:10.6px;line-height:13.78px;color:#4a4a4a;font-family:'Liberation Sans',sans-serif;">A</span>
<span class="t" style="left:161.24px;top:170.71px;font-size:10.6px;line-height:13.78px;color:#4a4a4a;font-family:'Liberation Sans',sans-serif;">B</span>
<span class="t" style="left:210.90px;top:170.71px;font-size:10.6px;line-height:13.78px;color:#4a4a4a;font-family:'Liberation Sans',sans-serif;">C</span>
<span class="t" style="left:260.85px;top:170.71px;font-size:10.6px;line-height:13.78px;color:#217346;font-family:'Liberation Sans',sans-serif;">D</span>
<span class="t" style="left:311.09px;top:170.71px;font-size:10.6px;line-height:13.78px;color:#4a4a4a;font-family:'Liberation Sans',sans-serif;">E</span>
<span class="t" style="left:361.34px;top:170.71px;font-size:10.6px;line-height:13.78px;color:#4a4a4a;font-family:'Liberation Sans',sans-serif;">F</span>
<span class="t" style="left:410.40px;top:170.71px;font-size:10.6px;line-height:13.78px;color:#4a4a4a;font-family:'Liberation Sans',sans-serif;">G</span>
<span class="t" style="left:460.65px;top:170.71px;font-size:10.6px;line-height:13.78px;color:#4a4a4a;font-family:'Liberation Sans',sans-serif;">H</span>
<span class="t" style="left:512.95px;top:170.71px;font-size:10.6px;line-height:13.78px;color:#4a4a4a;font-family:'Liberation Sans',sans-serif;">I</span>
<span class="t" style="left:561.73px;top:170.71px;font-size:10.6px;line-height:13.78px;color:#4a4a4a;font-family:'Liberation Sans',sans-serif;">J</span>
<span class="t" style="left:610.79px;top:170.71px;font-size:10.6px;line-height:13.78px;color:#4a4a4a;font-family:'Liberation Sans',sans-serif;">K</span>
<span class="t" style="left:661.33px;top:170.71px;font-size:10.6px;line-height:13.78px;color:#4a4a4a;font-family:'Liberation Sans',sans-serif;">L</span>
<span class="t" style="left:709.81px;top:170.71px;font-size:10.6px;line-height:13.78px;color:#4a4a4a;font-family:'Liberation Sans',sans-serif;">M</span>
<span class="t" style="left:760.35px;top:170.71px;font-size:10.6px;line-height:13.78px;color:#4a4a4a;font-family:'Liberation Sans',sans-serif;">N</span>
<span class="t" style="left:68.72px;top:185.82px;font-size:10px;line-height:13.0px;color:#4a4a4a;font-family:'Liberation Sans',sans-serif;">1</span>
<span class="t" style="left:68.72px;top:200.26px;font-size:10px;line-height:13.0px;color:#4a4a4a;font-family:'Liberation Sans',sans-serif;">2</span>
<span class="t" style="left:68.72px;top:214.70px;font-size:10px;line-height:13.0px;color:#217346;font-family:'Liberation Sans',sans-serif;">3</span>
<span class="t" style="left:68.72px;top:229.14px;font-size:10px;line-height:13.0px;color:#4a4a4a;font-family:'Liberation Sans',sans-serif;">4</span>
<span class="t" style="left:68.72px;top:243.58px;font-size:10px;line-height:13.0px;color:#4a4a4a;font-family:'Liberation Sans',sans-serif;">5</span>
<span class="t" style="left:68.72px;top:258.02px;font-size:10px;line-height:13.0px;color:#4a4a4a;font-family:'Liberation Sans',sans-serif;">6</span>
<span class="t" style="left:68.72px;top:272.46px;font-size:10px;line-height:13.0px;color:#4a4a4a;font-family:'Liberation Sans',sans-serif;">7</span>
<span class="t" style="left:68.72px;top:286.90px;font-size:10px;line-height:13.0px;color:#4a4a4a;font-family:'Liberation Sans',sans-serif;">8</span>
<span class="t" style="left:68.72px;top:301.34px;font-size:10px;line-height:13.0px;color:#4a4a4a;font-family:'Liberation Sans',sans-serif;">9</span>
<span class="t" style="left:65.94px;top:315.78px;font-size:10px;line-height:13.0px;color:#4a4a4a;font-family:'Liberation Sans',sans-serif;">10</span>
<span class="t" style="left:66.31px;top:330.22px;font-size:10px;line-height:13.0px;color:#4a4a4a;font-family:'Liberation Sans',sans-serif;">11</span>
<span class="t" style="left:65.94px;top:344.66px;font-size:10px;line-height:13.0px;color:#4a4a4a;font-family:'Liberation Sans',sans-serif;">12</span>
<span class="t" style="left:65.94px;top:359.10px;font-size:10px;line-height:13.0px;color:#4a4a4a;font-family:'Liberation Sans',sans-serif;">13</span>
<span class="t" style="left:65.94px;top:373.54px;font-size:10px;line-height:13.0px;color:#4a4a4a;font-family:'Liberation Sans',sans-serif;">14</span>
<span class="t" style="left:65.94px;top:387.98px;font-size:10px;line-height:13.0px;color:#4a4a4a;font-family:'Liberation Sans',sans-serif;">15</span>
<span class="t" style="left:65.94px;top:402.42px;font-size:10px;line-height:13.0px;color:#4a4a4a;font-family:'Liberation Sans',sans-serif;">16</span>
<span class="t" style="left:65.94px;top:416.86px;font-size:10px;line-height:13.0px;color:#4a4a4a;font-family:'Liberation Sans',sans-serif;">17</span>
<div class="r" style="left:60px;top:429.48px;width:24px;height:5.52px;overflow:hidden">
<span class="t" style="left:5.94px;top:1.82px;font-size:10px;line-height:13.0px;color:#4a4a4a;font-family:'Liberation Sans',sans-serif;">18</span>
</div>
<div class="r" style="left:139.80px;top:198.44px;width:49.95px;height:14.44px;background:#fdc57d;"></div>
<div class="r" style="left:139.80px;top:212.88px;width:49.95px;height:14.44px;background:#a5d17f;"></div>
<div class="r" style="left:139.80px;top:227.32px;width:49.95px;height:14.44px;background:#63be7b;"></div>
<div class="r" style="left:139.80px;top:241.76px;width:49.95px;height:14.44px;background:#fdbe7b;"></div>
<div class="r" style="left:139.80px;top:256.20px;width:49.95px;height:14.44px;background:#d4df82;"></div>
<div class="r" style="left:139.80px;top:270.64px;width:49.95px;height:14.44px;background:#fcb97a;"></div>
<div class="r" style="left:139.80px;top:285.08px;width:49.95px;height:14.44px;background:#f9756d;"></div>
<div class="r" style="left:139.80px;top:299.52px;width:49.95px;height:14.44px;background:#85c87d;"></div>
<div class="r" style="left:139.80px;top:313.96px;width:49.95px;height:14.44px;background:#9fcf7e;"></div>
<div class="r" style="left:139.80px;top:328.40px;width:49.95px;height:14.44px;background:#cedd81;"></div>
<div class="r" style="left:139.80px;top:342.84px;width:49.95px;height:14.44px;background:#fdc37c;"></div>
<div class="r" style="left:139.80px;top:357.28px;width:49.95px;height:14.44px;background:#fdbf7b;"></div>
<div class="r" style="left:189.75px;top:198.44px;width:49.95px;height:14.44px;background:#e0e282;"></div>
<div class="r" style="left:189.75px;top:212.88px;width:49.95px;height:14.44px;background:#fedb81;"></div>
<div class="r" style="left:189.75px;top:227.32px;width:49.95px;height:14.44px;background:#8fcb7e;"></div>
<div class="r" style="left:189.75px;top:241.76px;width:49.95px;height:14.44px;background:#e8e483;"></div>
<div class="r" style="left:189.75px;top:256.20px;width:49.95px;height:14.44px;background:#83c77d;"></div>
<div class="r" style="left:189.75px;top:270.64px;width:49.95px;height:14.44px;background:#fba576;"></div>
<div class="r" style="left:189.75px;top:285.08px;width:49.95px;height:14.44px;background:#fdc67d;"></div>
<div class="r" style="left:189.75px;top:299.52px;width:49.95px;height:14.44px;background:#fba777;"></div>
<div class="r" style="left:189.75px;top:313.96px;width:49.95px;height:14.44px;background:#6ec17c;"></div>
<div class="r" style="left:189.75px;top:328.40px;width:49.95px;height:14.44px;background:#fa8771;"></div>
<div class="r" style="left:189.75px;top:342.84px;width:49.95px;height:14.44px;background:#fdc87d;"></div>
<div class="r" style="left:189.75px;top:357.28px;width:49.95px;height:14.44px;background:#ffe383;"></div>
<div class="r" style="left:239.70px;top:198.44px;width:49.95px;height:14.44px;background:#f8696b;"></div>
<div class="r" style="left:239.70px;top:212.88px;width:49.95px;height:14.44px;background:#faea84;"></div>
<div class="r" style="left:239.70px;top:227.32px;width:49.95px;height:14.44px;background:#d8e082;"></div>
<div class="r" style="left:239.70px;top:241.76px;width:49.95px;height:14.44px;background:#e3e382;"></div>
<div class="r" style="left:239.70px;top:256.20px;width:49.95px;height:14.44px;background:#f1e783;"></div>
<div class="r" style="left:239.70px;top:270.64px;width:49.95px;height:14.44px;background:#84c87d;"></div>
<div class="r" style="left:239.70px;top:285.08px;width:49.95px;height:14.44px;background:#b2d580;"></div>
<div class="r" style="left:239.70px;top:299.52px;width:49.95px;height:14.44px;background:#a4d17f;"></div>
<div class="r" style="left:239.70px;top:313.96px;width:49.95px;height:14.44px;background:#fdbf7c;"></div>
<div class="r" style="left:239.70px;top:328.40px;width:49.95px;height:14.44px;background:#f9776e;"></div>
<div class="r" style="left:239.70px;top:342.84px;width:49.95px;height:14.44px;background:#fdcd7e;"></div>
<div class="r" style="left:239.70px;top:357.28px;width:49.95px;height:14.44px;background:#fba075;"></div>
<div class="r" style="left:81.10px;top:183.50px;width:209.05px;height:1.00px;background:rgba(35,35,35,0.7);"></div>
<div class="r" style="left:81.10px;top:197.94px;width:209.05px;height:1.00px;background:rgba(35,35,35,0.7);"></div>
<div class="r" style="left:81.10px;top:212.38px;width:209.05px;height:1.00px;background:rgba(35,35,35,0.7);"></div>
<div class="r" style="left:81.10px;top:226.82px;width:209.05px;height:1.00px;background:rgba(35,35,35,0.7);"></div>
<div class="r" style="left:81.10px;top:241.26px;width:209.05px;height:1.00px;background:rgba(35,35,35,0.7);"></div>
<div class="r" style="left:81.10px;top:255.70px;width:209.05px;height:1.00px;background:rgba(35,35,35,0.7);"></div>
<div class="r" style="left:81.10px;top:270.14px;width:209.05px;height:1.00px;background:rgba(35,35,35,0.7);"></div>
<div class="r" style="left:81.10px;top:284.58px;width:209.05px;height:1.00px;background:rgba(35,35,35,0.7);"></div>
<div class="r" style="left:81.10px;top:299.02px;width:209.05px;height:1.00px;background:rgba(35,35,35,0.7);"></div>
<div class="r" style="left:81.10px;top:313.46px;width:209.05px;height:1.00px;background:rgba(35,35,35,0.7);"></div>
<div class="r" style="left:81.10px;top:327.90px;width:209.05px;height:1.00px;background:rgba(35,35,35,0.7);"></div>
<div class="r" style="left:81.10px;top:342.34px;width:209.05px;height:1.00px;background:rgba(35,35,35,0.7);"></div>
<div class="r" style="left:81.10px;top:356.78px;width:209.05px;height:1.00px;background:rgba(35,35,35,0.7);"></div>
<div class="r" style="left:81.10px;top:371.22px;width:209.05px;height:1.00px;background:rgba(35,35,35,0.7);"></div>
<div class="r" style="left:81.10px;top:183.50px;width:1.00px;height:188.72px;background:rgba(35,35,35,0.7);"></div>
<div class="r" style="left:139.30px;top:183.50px;width:1.00px;height:188.72px;background:rgba(35,35,35,0.7);"></div>
<div class="r" style="left:189.25px;top:183.50px;width:1.00px;height:188.72px;background:rgba(35,35,35,0.7);"></div>
<div class="r" style="left:239.20px;top:183.50px;width:1.00px;height:188.72px;background:rgba(35,35,35,0.7);"></div>
<div class="r" style="left:289.15px;top:183.50px;width:1.00px;height:188.72px;background:rgba(35,35,35,0.7);"></div>
<span class="t" style="left:166.39px;top:185.72px;font-size:10px;line-height:13.0px;color:#111;font-family:'Liberation Sans',sans-serif;font-weight:700;transform:scaleX(0.9600);transform-origin:0 50%;">2021</span>
<span class="t" style="left:216.34px;top:185.72px;font-size:10px;line-height:13.0px;color:#111;font-family:'Liberation Sans',sans-serif;font-weight:700;transform:scaleX(0.9600);transform-origin:0 50%;">2022</span>
<span class="t" style="left:266.29px;top:185.72px;font-size:10px;line-height:13.0px;color:#111;font-family:'Liberation Sans',sans-serif;font-weight:700;transform:scaleX(0.9600);transform-origin:0 50%;">2023</span>
<span class="t" style="left:83.40px;top:200.16px;font-size:10px;line-height:13.0px;color:#111;font-family:'Liberation Sans',sans-serif;font-weight:700;transform:scaleX(0.9850);transform-origin:0 50%;">January</span>
<span class="t" style="left:171.07px;top:199.90px;font-size:10.4px;line-height:13.52px;color:#111;font-family:'Liberation Sans',sans-serif;transform:scaleX(0.9615);transform-origin:0 50%;-webkit-text-stroke:0.15px #222;">845</span>
<span class="t" style="left:216.20px;top:199.90px;font-size:10.4px;line-height:13.52px;color:#111;font-family:'Liberation Sans',sans-serif;transform:scaleX(0.9615);transform-origin:0 50%;-webkit-text-stroke:0.15px #222;">1165</span>
<span class="t" style="left:270.97px;top:199.90px;font-size:10.4px;line-height:13.52px;color:#111;font-family:'Liberation Sans',sans-serif;transform:scaleX(0.9615);transform-origin:0 50%;-webkit-text-stroke:0.15px #222;">510</span>
<span class="t" style="left:83.40px;top:214.60px;font-size:10px;line-height:13.0px;color:#111;font-family:'Liberation Sans',sans-serif;font-weight:700;transform:scaleX(0.9850);transform-origin:0 50%;">February</span>
<span class="t" style="left:165.50px;top:214.34px;font-size:10.4px;line-height:13.52px;color:#111;font-family:'Liberation Sans',sans-serif;transform:scaleX(0.9615);transform-origin:0 50%;-webkit-text-stroke:0.15px #222;">1502</span>
<span class="t" style="left:221.02px;top:214.34px;font-size:10.4px;line-height:13.52px;color:#111;font-family:'Liberation Sans',sans-serif;transform:scaleX(0.9615);transform-origin:0 50%;-webkit-text-stroke:0.15px #222;">925</span>
<span class="t" style="left:265.40px;top:214.34px;font-size:10.4px;line-height:13.52px;color:#111;font-family:'Liberation Sans',sans-serif;transform:scaleX(0.9615);transform-origin:0 50%;-webkit-text-stroke:0.15px #222;">1012</span>
<span class="t" style="left:83.40px;top:229.04px;font-size:10px;line-height:13.0px;color:#111;font-family:'Liberation Sans',sans-serif;font-weight:700;transform:scaleX(0.9850);transform-origin:0 50%;">March</span>
<span class="t" style="left:165.50px;top:228.78px;font-size:10.4px;line-height:13.52px;color:#111;font-family:'Liberation Sans',sans-serif;transform:scaleX(0.9615);transform-origin:0 50%;-webkit-text-stroke:0.15px #222;">1882</span>
<span class="t" style="left:215.45px;top:228.78px;font-size:10.4px;line-height:13.52px;color:#111;font-family:'Liberation Sans',sans-serif;transform:scaleX(0.9615);transform-origin:0 50%;-webkit-text-stroke:0.15px #222;">1629</span>
<span class="t" style="left:265.40px;top:228.78px;font-size:10.4px;line-height:13.52px;color:#111;font-family:'Liberation Sans',sans-serif;transform:scaleX(0.9615);transform-origin:0 50%;-webkit-text-stroke:0.15px #222;">1208</span>
<span class="t" style="left:83.40px;top:243.48px;font-size:10px;line-height:13.0px;color:#111;font-family:'Liberation Sans',sans-serif;font-weight:700;transform:scaleX(0.9850);transform-origin:0 50%;">April</span>
<span class="t" style="left:171.07px;top:243.22px;font-size:10.4px;line-height:13.52px;color:#111;font-family:'Liberation Sans',sans-serif;transform:scaleX(0.9615);transform-origin:0 50%;-webkit-text-stroke:0.15px #222;">819</span>
<span class="t" style="left:216.94px;top:243.22px;font-size:10.4px;line-height:13.52px;color:#111;font-family:'Liberation Sans',sans-serif;transform:scaleX(0.9615);transform-origin:0 50%;-webkit-text-stroke:0.15px #222;">1118</span>
<span class="t" style="left:266.15px;top:243.22px;font-size:10.4px;line-height:13.52px;color:#111;font-family:'Liberation Sans',sans-serif;transform:scaleX(0.9615);transform-origin:0 50%;-webkit-text-stroke:0.15px #222;">1146</span>
<span class="t" style="left:83.40px;top:257.92px;font-size:10px;line-height:13.0px;color:#111;font-family:'Liberation Sans',sans-serif;font-weight:700;transform:scaleX(0.9850);transform-origin:0 50%;">May</span>
<span class="t" style="left:165.50px;top:257.66px;font-size:10.4px;line-height:13.52px;color:#111;font-family:'Liberation Sans',sans-serif;transform:scaleX(0.9615);transform-origin:0 50%;-webkit-text-stroke:0.15px #222;">1230</span>
<span class="t" style="left:215.45px;top:257.66px;font-size:10.4px;line-height:13.52px;color:#111;font-family:'Liberation Sans',sans-serif;transform:scaleX(0.9615);transform-origin:0 50%;-webkit-text-stroke:0.15px #222;">1699</span>
<span class="t" style="left:265.40px;top:257.66px;font-size:10.4px;line-height:13.52px;color:#111;font-family:'Liberation Sans',sans-serif;transform:scaleX(0.9615);transform-origin:0 50%;-webkit-text-stroke:0.15px #222;">1064</span>
<span class="t" style="left:83.40px;top:272.36px;font-size:10px;line-height:13.0px;color:#111;font-family:'Liberation Sans',sans-serif;font-weight:700;transform:scaleX(0.9850);transform-origin:0 50%;">June</span>
<span class="t" style="left:171.07px;top:272.10px;font-size:10.4px;line-height:13.52px;color:#111;font-family:'Liberation Sans',sans-serif;transform:scaleX(0.9615);transform-origin:0 50%;-webkit-text-stroke:0.15px #222;">801</span>
<span class="t" style="left:221.02px;top:272.10px;font-size:10.4px;line-height:13.52px;color:#111;font-family:'Liberation Sans',sans-serif;transform:scaleX(0.9615);transform-origin:0 50%;-webkit-text-stroke:0.15px #222;">728</span>
<span class="t" style="left:265.40px;top:272.10px;font-size:10.4px;line-height:13.52px;color:#111;font-family:'Liberation Sans',sans-serif;transform:scaleX(0.9615);transform-origin:0 50%;-webkit-text-stroke:0.15px #222;">1692</span>
<span class="t" style="left:83.40px;top:286.80px;font-size:10px;line-height:13.0px;color:#111;font-family:'Liberation Sans',sans-serif;font-weight:700;transform:scaleX(0.9850);transform-origin:0 50%;">July</span>
<span class="t" style="left:171.07px;top:286.54px;font-size:10.4px;line-height:13.52px;color:#111;font-family:'Liberation Sans',sans-serif;transform:scaleX(0.9615);transform-origin:0 50%;-webkit-text-stroke:0.15px #222;">554</span>
<span class="t" style="left:221.02px;top:286.54px;font-size:10.4px;line-height:13.52px;color:#111;font-family:'Liberation Sans',sans-serif;transform:scaleX(0.9615);transform-origin:0 50%;-webkit-text-stroke:0.15px #222;">850</span>
<span class="t" style="left:265.40px;top:286.54px;font-size:10.4px;line-height:13.52px;color:#111;font-family:'Liberation Sans',sans-serif;transform:scaleX(0.9615);transform-origin:0 50%;-webkit-text-stroke:0.15px #222;">1425</span>
<span class="t" style="left:83.40px;top:301.24px;font-size:10px;line-height:13.0px;color:#111;font-family:'Liberation Sans',sans-serif;font-weight:700;transform:scaleX(0.9850);transform-origin:0 50%;">August</span>
<span class="t" style="left:165.50px;top:300.98px;font-size:10.4px;line-height:13.52px;color:#111;font-family:'Liberation Sans',sans-serif;transform:scaleX(0.9615);transform-origin:0 50%;-webkit-text-stroke:0.15px #222;">1688</span>
<span class="t" style="left:221.02px;top:300.98px;font-size:10.4px;line-height:13.52px;color:#111;font-family:'Liberation Sans',sans-serif;transform:scaleX(0.9615);transform-origin:0 50%;-webkit-text-stroke:0.15px #222;">738</span>
<span class="t" style="left:265.40px;top:300.98px;font-size:10.4px;line-height:13.52px;color:#111;font-family:'Liberation Sans',sans-serif;transform:scaleX(0.9615);transform-origin:0 50%;-webkit-text-stroke:0.15px #222;">1506</span>
<span class="t" style="left:83.40px;top:315.68px;font-size:10px;line-height:13.0px;color:#111;font-family:'Liberation Sans',sans-serif;font-weight:700;transform:scaleX(0.9850);transform-origin:0 50%;">September</span>
<span class="t" style="left:165.50px;top:315.42px;font-size:10.4px;line-height:13.52px;color:#111;font-family:'Liberation Sans',sans-serif;transform:scaleX(0.9615);transform-origin:0 50%;-webkit-text-stroke:0.15px #222;">1536</span>
<span class="t" style="left:215.45px;top:315.42px;font-size:10.4px;line-height:13.52px;color:#111;font-family:'Liberation Sans',sans-serif;transform:scaleX(0.9615);transform-origin:0 50%;-webkit-text-stroke:0.15px #222;">1819</span>
<span class="t" style="left:270.97px;top:315.42px;font-size:10.4px;line-height:13.52px;color:#111;font-family:'Liberation Sans',sans-serif;transform:scaleX(0.9615);transform-origin:0 50%;-webkit-text-stroke:0.15px #222;">825</span>
<span class="t" style="left:83.40px;top:330.12px;font-size:10px;line-height:13.0px;color:#111;font-family:'Liberation Sans',sans-serif;font-weight:700;transform:scaleX(0.9850);transform-origin:0 50%;">October</span>
<span class="t" style="left:165.50px;top:329.86px;font-size:10.4px;line-height:13.52px;color:#111;font-family:'Liberation Sans',sans-serif;transform:scaleX(0.9615);transform-origin:0 50%;-webkit-text-stroke:0.15px #222;">1269</span>
<span class="t" style="left:221.02px;top:329.86px;font-size:10.4px;line-height:13.52px;color:#111;font-family:'Liberation Sans',sans-serif;transform:scaleX(0.9615);transform-origin:0 50%;-webkit-text-stroke:0.15px #222;">620</span>
<span class="t" style="left:270.97px;top:329.86px;font-size:10.4px;line-height:13.52px;color:#111;font-family:'Liberation Sans',sans-serif;transform:scaleX(0.9615);transform-origin:0 50%;-webkit-text-stroke:0.15px #222;">561</span>
<span class="t" style="left:83.40px;top:344.56px;font-size:10px;line-height:13.0px;color:#111;font-family:'Liberation Sans',sans-serif;font-weight:700;transform:scaleX(0.9850);transform-origin:0 50%;">November</span>
<span class="t" style="left:171.07px;top:344.30px;font-size:10.4px;line-height:13.52px;color:#111;font-family:'Liberation Sans',sans-serif;transform:scaleX(0.9615);transform-origin:0 50%;-webkit-text-stroke:0.15px #222;">838</span>
<span class="t" style="left:221.02px;top:344.30px;font-size:10.4px;line-height:13.52px;color:#111;font-family:'Liberation Sans',sans-serif;transform:scaleX(0.9615);transform-origin:0 50%;-webkit-text-stroke:0.15px #222;">858</span>
<span class="t" style="left:270.97px;top:344.30px;font-size:10.4px;line-height:13.52px;color:#111;font-family:'Liberation Sans',sans-serif;transform:scaleX(0.9615);transform-origin:0 50%;-webkit-text-stroke:0.15px #222;">874</span>
<span class="t" style="left:83.40px;top:359.00px;font-size:10px;line-height:13.0px;color:#111;font-family:'Liberation Sans',sans-serif;font-weight:700;transform:scaleX(0.9850);transform-origin:0 50%;">December</span>
<span class="t" style="left:171.07px;top:358.74px;font-size:10.4px;line-height:13.52px;color:#111;font-family:'Liberation Sans',sans-serif;transform:scaleX(0.9615);transform-origin:0 50%;-webkit-text-stroke:0.15px #222;">823</span>
<span class="t" style="left:221.02px;top:358.74px;font-size:10.4px;line-height:13.52px;color:#111;font-family:'Liberation Sans',sans-serif;transform:scaleX(0.9615);transform-origin:0 50%;-webkit-text-stroke:0.15px #222;">957</span>
<span class="t" style="left:270.97px;top:358.74px;font-size:10.4px;line-height:13.52px;color:#111;font-family:'Liberation Sans',sans-serif;transform:scaleX(0.9615);transform-origin:0 50%;-webkit-text-stroke:0.15px #222;">709</span>
<div class="r" style="left:384.20px;top:254.80px;width:47.50px;height:1.00px;background:#a0a0a0;"></div>
<div class="r" style="left:383.70px;top:255.30px;width:1.00px;height:13.90px;background:#a0a0a0;"></div>
<div class="r" style="left:384.20px;top:268.70px;width:13.80px;height:1.00px;background:#a0a0a0;"></div>
<div class="r" style="left:387.60px;top:259.20px;width:7.60px;height:7.60px;background:#fff;border:1px solid #555;box-sizing:border-box;"></div>
<span class="t" style="left:398.20px;top:258.58px;font-size:6.8px;line-height:8.84px;color:#3a3a3a;font-family:'Liberation Sans',sans-serif;transform:scaleX(0.8767);transform-origin:0 50%;">Check Box 8</span>
<svg class="r" style="left:378.00px;top:249.00px" width="60" height="26" viewBox="0 0 60 26"><circle cx="6.2" cy="6.3" r="3.0" fill="#fff" stroke="#505050" stroke-width="1.4"/><circle cx="30.0" cy="6.3" r="3.0" fill="#fff" stroke="#505050" stroke-width="1.4"/><circle cx="53.7" cy="6.3" r="3.0" fill="#fff" stroke="#505050" stroke-width="1.4"/><circle cx="6.2" cy="20.2" r="3.0" fill="#fff" stroke="#505050" stroke-width="1.4"/></svg>
<div class="r" style="left:397.20px;top:262.00px;width:87.60px;height:123.60px;background:#fff;border:1px solid #b9b9b9;box-sizing:border-box;box-shadow:1px 1px 2px rgba(0,0,0,0.18);"></div>
<span class="t" style="left:417.20px;top:265.93px;font-size:7.8px;line-height:10.14px;color:#333;font-family:'Liberation Sans',sans-serif;transform:scaleX(0.9062);transform-origin:0 50%;">Cu<u>t</u></span>
<span class="t" style="left:417.20px;top:280.63px;font-size:7.8px;line-height:10.14px;color:#333;font-family:'Liberation Sans',sans-serif;transform:scaleX(0.9171);transform-origin:0 50%;"><u>C</u>opy</span>
<span class="t" style="left:417.20px;top:294.93px;font-size:7.8px;line-height:10.14px;color:#333;font-family:'Liberation Sans',sans-serif;transform:scaleX(0.8423);transform-origin:0 50%;"><u>P</u>aste</span>
<span class="t" style="left:417.20px;top:310.53px;font-size:7.8px;line-height:10.14px;color:#333;font-family:'Liberation Sans',sans-serif;transform:scaleX(0.9438);transform-origin:0 50%;">Edit Te<u>x</u>t</span>
<span class="t" style="left:417.30px;top:326.43px;font-size:7.8px;line-height:10.14px;color:#333;font-family:'Liberation Sans',sans-serif;transform:scaleX(0.9225);transform-origin:0 50%;"><u>G</u>rouping</span>
<span class="t" style="left:417.40px;top:340.53px;font-size:7.8px;line-height:10.14px;color:#333;font-family:'Liberation Sans',sans-serif;transform:scaleX(0.9128);transform-origin:0 50%;">O<u>r</u>der</span>
<span class="t" style="left:417.50px;top:356.63px;font-size:7.8px;line-height:10.14px;color:#333;font-family:'Liberation Sans',sans-serif;transform:scaleX(0.8763);transform-origin:0 50%;">Assig<u>n</u> Macro...</span>
<div class="r" style="left:417.50px;top:307.20px;width:64.30px;height:0.80px;background:#e3e3e3;"></div>
<div class="r" style="left:417.50px;top:322.20px;width:64.30px;height:0.80px;background:#e3e3e3;"></div>
<div class="r" style="left:417.50px;top:351.40px;width:64.30px;height:0.80px;background:#e3e3e3;"></div>
<svg class="r" style="left:474.50px;top:328.00px" width="4" height="6" viewBox="0 0 4 6"><path d="M0.6 0.4 L3.4 2.8 L0.6 5.2 Z" fill="#333"/></svg>
<svg class="r" style="left:474.50px;top:342.20px" width="4" height="6" viewBox="0 0 4 6"><path d="M0.6 0.4 L3.4 2.8 L0.6 5.2 Z" fill="#333"/></svg>
<div class="r" style="left:395.20px;top:369.00px;width:91.80px;height:15.00px;background:#e4f0ea;border:3.1px solid #f80606;box-sizing:border-box;"></div>
<span class="t" style="left:417.40px;top:371.13px;font-size:7.8px;line-height:10.14px;color:#333;font-family:'Liberation Sans',sans-serif;transform:scaleX(0.8869);transform-origin:0 50%;"><u>F</u>ormat Control...</span>
<svg class="r" style="left:398.00px;top:264.00px" width="14" height="58" viewBox="0 0 14 58"><path d="M4.60 2.60 L9.60 9.00" fill="none" stroke="#555" stroke-width="0.9"/><path d="M10.00 2.60 L5.00 9.00" fill="none" stroke="#555" stroke-width="0.9"/><circle cx="4.60" cy="9.60" r="1.5" fill="#fff" stroke="#2f74c8" stroke-width="0.9"/><circle cx="10.00" cy="9.60" r="1.5" fill="#fff" stroke="#2f74c8" stroke-width="0.9"/><rect x="3.60" y="16.60" width="5.00" height="6.20" fill="#eef2f7" stroke="#7f8ea3" stroke-width="0.8" rx="0"/><rect x="6.20" y="19.00" width="5.20" height="6.40" fill="#f7f9fc" stroke="#7f8ea3" stroke-width="0.8" rx="0"/><rect x="7.40" y="21.20" width="2.80" height="0.60" fill="#9aa7b8" rx="0"/><rect x="7.40" y="23.00" width="2.80" height="0.60" fill="#9aa7b8" rx="0"/><rect x="3.20" y="31.40" width="7.00" height="8.60" fill="#eab676" rx="0.6"/><rect x="5.20" y="30.40" width="3.00" height="2.00" fill="#8a8a8a" rx="0.5"/><rect x="7.00" y="34.40" width="5.00" height="6.20" fill="#fff" stroke="#8a8a8a" stroke-width="0.7" rx="0"/><rect x="3.00" y="47.40" width="9.00" height="8.00" fill="#f3f3f3" stroke="#9a9a9a" stroke-width="0.8" rx="0"/><rect x="3.00" y="52.80" width="9.00" height="2.60" fill="#d9d9d9" rx="0"/></svg>
<span class="t" style="left:402.20px;top:311.34px;font-size:4.4px;line-height:5.72px;color:#2f5fa8;font-family:'Liberation Sans',sans-serif;font-weight:700;transform:scaleX(0.8812);transform-origin:0 50%;">A</span>
<svg class="r" style="left:398.00px;top:370.00px" width="16" height="13" viewBox="0 0 16 13"><circle cx="6.00" cy="4.60" r="2.4" fill="#fff" stroke="#777" stroke-width="0.9"/><path d="M7.80 6.60 L10.40 9.60" fill="none" stroke="#2f74c8" stroke-width="1.3"/><path d="M13.00 2.80 L8.60 8.40" fill="none" stroke="#666" stroke-width="1.0"/><path d="M3.60 8.80 L6.40 11.00" fill="none" stroke="#2f74c8" stroke-width="1.1"/></svg>
</body></html>
